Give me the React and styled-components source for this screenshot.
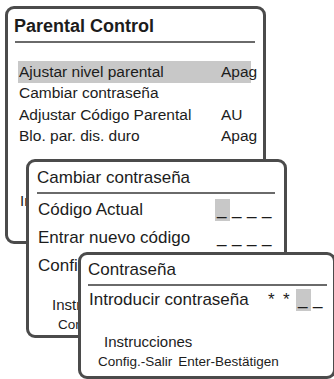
import React from 'react';
import styled, { createGlobalStyle } from 'styled-components';

const Global = createGlobalStyle`
    html, body {
        margin: 0;
        padding: 0;
        background: #fff;
    }
    body {
        width: 334px;
        height: 379px;
        overflow: hidden;
        font-family: "Liberation Sans", Arial, sans-serif;
        color: #1c1c1c;
    }
`

const Stage = styled.div`
    position: relative;
    width: 334px;
    height: 379px;
    overflow: hidden;
`

// overlapping menu windows, like windows on a desktop
const Window = styled.section`
    position: absolute;
    left: ${({ $x }) => $x}px;
    top: ${({ $y }) => $y}px;
    width: ${({ $w }) => $w}px;
    height: ${({ $h }) => $h}px;
    box-sizing: border-box;
    border: 3px solid #4b4b4b;
    border-radius: 9px;
    background: #fff;
    padding: ${({ $pad }) => $pad};
    display: flex;
    flex-direction: column;
`

const Title = styled.div`
    font-weight: ${({ $bold }) => $bold ? 700 : 400};
    font-size: ${({ $size }) => $size}px;
    line-height: 22px;
    white-space: nowrap;
`

const Rule = styled.div`
    height: 2px;
    background: #6a6a6a;
    margin: ${({ $m }) => $m};
`

const List = styled.div`
    display: flex;
    flex-direction: column;
    margin: ${({ $m }) => $m};
`

const Row = styled.div`
    display: grid;
    grid-template-columns: ${({ $label }) => $label}px 1fr;
    align-items: center;
    height: ${({ $h }) => $h}px;
    font-size: ${({ $size }) => $size}px;
    white-space: nowrap;
    padding-left: 1px;
    background: ${({ $active }) => $active ? '#c8c8c8' : 'transparent'};
`

const Code = styled.div`
    display: flex;
    align-items: center;
`

const Slot = styled.span`
    width: 15px;
    height: 22px;
    box-sizing: border-box;
    padding-left: 2px;
    line-height: 22px;
    background: ${({ $active }) => $active ? '#c8c8c8' : 'transparent'};
`

const Help = styled.div`
    display: flex;
    flex-direction: column;
    margin: ${({ $m }) => $m};
    white-space: nowrap;

    .head {
        font-size: 15px;
        line-height: 22px;
        padding-left: ${({ $indent }) => $indent}px;
    }

    .keys {
        display: flex;
        gap: 6px;
        font-size: 13.5px;
        line-height: 18px;
        padding-left: ${({ $keys }) => $keys}px;
    }
`

const mainItems = [
    { label: 'Ajustar nivel parental', value: 'Apag', active: true },
    { label: 'Cambiar contraseña', value: '' },
    { label: 'Adjustar Código Parental', value: 'AU' },
    { label: 'Blo. par. dis. duro', value: 'Apag' },
]

const CodeField = ({ chars, active }) => (
    <Code>
        {chars.map((c, i) => (
            <Slot key={i} $active={i === active}>{c}</Slot>
        ))}
    </Code>
)

const Keys = () => (
    <span className="keys">
        <span>Config.-Salir</span>
        <span>Enter-Bestätigen</span>
    </span>
)

const App = () => {
    return (
        <>
            <Global />
            <Stage>
                <Window $x={5} $y={6} $w={261} $h={238} $pad="6px 6px 0 6px">
                    <Title $bold $size={18}>Parental Control</Title>
                    <Rule $m="4px 2px 0 1px" />
                    <List $m="18px 6px 0 4px">
                        {mainItems.map((item) => (
                            <Row key={item.label} $label={202} $h={21.5} $size={15.5} $active={item.active}>
                                <span>{item.label}</span>
                                <span>{item.value}</span>
                            </Row>
                        ))}
                    </List>
                    <Help $m="43px 0 0 0" $indent={6} $keys={12}>
                        <span className="head">Instrucciones</span>
                        <Keys />
                    </Help>
                </Window>

                <Window $x={26} $y={159} $w={261} $h={179} $pad="5px 7px 0 8px">
                    <Title $size={17}>Cambiar contraseña</Title>
                    <Rule $m="3px 2px 0 0" />
                    <List $m="2px 0 0 0">
                        <Row $label={177} $h={28} $size={17}>
                            <span>Código Actual</span>
                            <CodeField chars={['_', '_', '_', '_']} active={0} />
                        </Row>
                        <Row $label={177} $h={28} $size={17}>
                            <span>Entrar nuevo código</span>
                            <CodeField chars={['_', '_', '_', '_']} active={-1} />
                        </Row>
                        <Row $label={177} $h={28} $size={17}>
                            <span>Confirmar código</span>
                            <CodeField chars={['_', '_', '_', '_']} active={-1} />
                        </Row>
                    </List>
                    <Help $m="14px 0 0 0" $indent={15} $keys={21}>
                        <span className="head">Instrucciones</span>
                        <Keys />
                    </Help>
                </Window>

                <Window $x={78} $y={252} $w={258} $h={127} $pad="4px 4px 0 7px">
                    <Title $size={17}>Contraseña</Title>
                    <Rule $m="3px 2px 0 0" />
                    <List $m="3px 0 0 0">
                        <Row $label={177} $h={22} $size={17}>
                            <span>Introducir contraseña</span>
                            <CodeField chars={['*', '*', '_', '_']} active={2} />
                        </Row>
                    </List>
                    <Help $m="20px 0 0 0" $indent={16} $keys={10}>
                        <span className="head">Instrucciones</span>
                        <Keys />
                    </Help>
                </Window>
            </Stage>
        </>
    )
}

export default App;
